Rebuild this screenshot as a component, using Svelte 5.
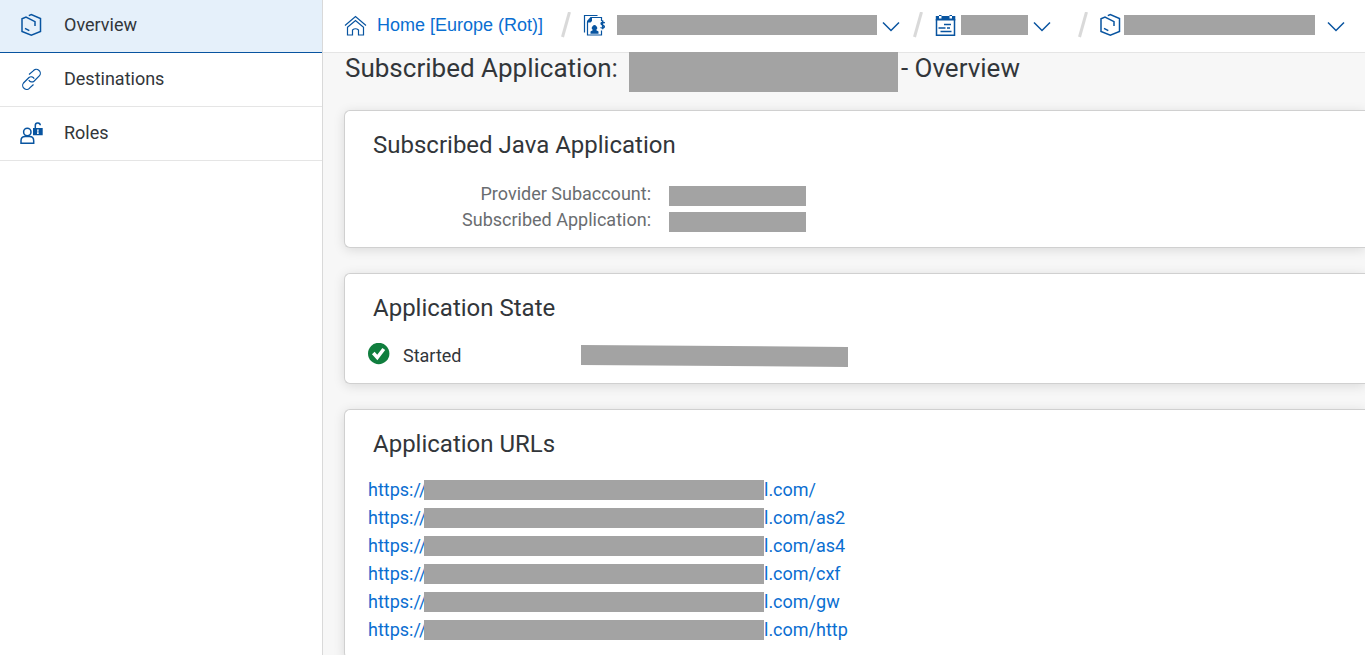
<script lang="ts">
  const nav = [
    { label: 'Overview', icon: 'cube' },
    { label: 'Destinations', icon: 'link' },
    { label: 'Roles', icon: 'roles' }
  ];
  const paths = ['', 'as2', 'as4', 'cxf', 'gw', 'http'];
</script>

{#snippet cube()}
  <svg class="icon" viewBox="0 0 24 24" aria-hidden="true">
    <path d="m8.800 2.600 2.500-1.100 9.200 4v13l-9.200 3.800L2 18.500V5.800L6 4l9 4.600V13M5 15.300l4.300 2.400" />
  </svg>
{/snippet}

{#snippet link()}
  <svg class="icon thin" viewBox="0 0 24 24" aria-hidden="true">
    <path d="m9 7.500 4.200-3.600a3.800 3.800 0 0 1 6.300 4.800l-5.500 5.500a3.400 3.400 0 0 1-5.200-1.200M13.500 17.500l-3.700 3.300a3.800 3.800 0 0 1-6.300-4.800L9 10.500a3.400 3.400 0 0 1 5.200 1.200" />
  </svg>
{/snippet}

{#snippet roles()}
  <svg class="icon" viewBox="0 0 24 24" aria-hidden="true">
    <circle cx="7.300" cy="11" r="3.700" />
    <path d="M1 22.200v-2.500q0-4.200 4.200-4.200h4.300q4.200 0 4.200 4.200v2.500zM15.300 7V4.800a2.500 2.500 0 0 1 5-.5" />
    <path class="solid" fill-rule="evenodd" d="M13 7h9.700v7.300H13zM17 8.500l.4 2-.4 2.500h1.800l-.4-2.500.4-2z" />
  </svg>
{/snippet}

{#snippet chevron()}
  <svg class="chevron" viewBox="0 0 18 24" aria-hidden="true"><path d="m1 9.500 8 8 8-8" /></svg>
{/snippet}

{#snippet slash()}
  <svg class="slash" viewBox="0 0 10 26" aria-hidden="true"><path d="M8.500 0 1.500 25" /></svg>
{/snippet}

<div class="page">
  <nav class="side" aria-label="Application">
    {#each nav as item, i}
      <a href="#{item.icon}" class:active={i === 0}>
        {#if item.icon === 'cube'}{@render cube()}{:else if item.icon === 'link'}{@render link()}{:else}{@render roles()}{/if}
        {item.label}
      </a>
    {/each}
  </nav>
  <main>
    <header>
      <a class="home" href="#home">
        <svg class="icon thin" viewBox="0 0 24 24" aria-hidden="true">
          <path d="m1 12.500 10.500-9 10.500 9M3.500 14.300l8-6.800 8 6.800V22h-5v-5q-3-2.500-6 0v5h-5z" />
        </svg>
        Home [Europe (Rot)]
      </a>
      {@render slash()}
      <button class="crumb account" aria-label="Global account">
        <svg class="icon thin" viewBox="0 0 24 24" aria-hidden="true">
          <path d="M1.500 19.500V2.500h13M9 4.500h9.500V8M4.500 9v13h14v-4.500" />
          <path class="solid" d="M4 9.500V8l3.500-4H9v4L7.500 9.500zM7.500 20.700v-2.200l2.500-1.500a2.600 2.600 0 1 1 3 0l2.500 1.500v2.200z" />
          <path class="dollar" d="M21.800 9.800c-3-1.700-5.300 1-2.300 2.200 3.500 1.300 1.500 4.300-2 2.500M19.600 7.300v9" />
        </svg>
        <span class="mask wide"></span>
        {@render chevron()}
      </button>
      {@render slash()}
      <button class="crumb sub" aria-label="Subaccount">
        <svg class="icon" viewBox="0 0 24 24" aria-hidden="true">
          <path d="M2.500 6v16.200h18V6M10 11.500h7M4.500 15h7M13 15h3M6.500 18.500h11" />
          <path class="solid" fill-rule="evenodd" d="M1.800 3h19.500v4.500H1.800zM5 2v3.500h2.500V2zM15.500 2v3.500H18V2z" />
        </svg>
        <span class="mask short"></span>
        {@render chevron()}
      </button>
      {@render slash()}
      <button class="crumb app" aria-label="Subscribed application">
        {@render cube()}
        <span class="mask medium"></span>
        {@render chevron()}
      </button>
    </header>

    <h1>Subscribed Application: <span class="mask title"></span>- Overview</h1>

    <section>
      <h2>Subscribed Java Application</h2>
      <dl>
        <dt>Provider Subaccount:</dt>
        <dd><span class="mask"></span></dd>
        <dt>Subscribed Application:</dt>
        <dd><span class="mask"></span></dd>
      </dl>
    </section>

    <section>
      <h2>Application State</h2>
      <div class="state">
        <svg class="ok" viewBox="0 0 22 22" aria-hidden="true">
          <circle cx="10.700" cy="10.500" r="10.700" />
          <path d="m5.300 10 4 4.500 6.500-8.500" />
        </svg>
        <span class="status">Started</span>
        <svg class="since" viewBox="0 0 267 22" aria-hidden="true"><path d="M0 0 267 2V22L0 20z" /></svg>
      </div>
    </section>

    <section class="last">
      <h2>Application URLs</h2>
      <ul>
        {#each paths as path}
          <li><a href="#{path}"><span class="scheme">https://</span><span class="mask"></span>l.com/{path}</a></li>
        {/each}
      </ul>
    </section>
  </main>
</div>

<style>
  :global(body) { margin: 0; background: #f7f7f7; }
  .page {
    display: flex;
    min-height: 100vh;
    font: 18px/26px Roboto, "Liberation Sans", sans-serif;
    color: #32363a;
    overflow: hidden;
  }
  a { color: #0a6ed1; text-decoration: none; }
  svg { flex: none; fill: none; stroke: #0854a0; stroke-width: 1.5; }
  .icon { width: 24px; height: 24px; }
  .thin { stroke-width: 1.2; }
  .solid { fill: #0854a0; stroke: none; }
  .dollar { stroke-width: 1.4; }
  .chevron { width: 18px; height: 24px; }
  .slash { width: 10px; height: 26px; stroke: #d9d9d9; stroke-width: 3; }
  .mask { flex: none; background: #a3a3a3; height: 20px; }

  .side {
    flex: none;
    width: 322px;
    background: #fff;
    border-right: 1px solid #d9d9d9;
  }
  .side a {
    display: flex;
    align-items: center;
    gap: 20px;
    height: 51px;
    padding: 0 0 2px 20px;
    color: #32363a;
    border-bottom: 1px solid #e5e5e5;
  }
  .side a.active { height: 50px; background: #e5f0fa; border-color: #0854a0; }

  main { flex: 1; min-width: 0; }
  header {
    display: flex;
    align-items: center;
    height: 50px;
    padding: 0 0 2px 21px;
    background: #fff;
    border-bottom: 1px solid #e5e5e5;
  }
  .home { display: flex; align-items: center; gap: 9px; width: 217px; font-family: "Liberation Sans", sans-serif; white-space: nowrap; }
  .crumb { display: flex; align-items: center; padding: 0; border: 0; background: none; }
  .account { margin: 0 13px 0 12px; }
  .wide { width: 260px; margin: 0 5px 0 10px; }
  .sub { margin: 0 27px 0 11px; }
  .short { width: 67px; margin: 0 5px 0 3px; }
  .app { margin-left: 11px; }
  .medium { width: 191px; margin: 0 12px 0 1px; }

  h1, h2 { margin: 0; font-weight: 400; }
  h1 {
    position: relative;
    display: flex;
    height: 58px;
    margin-top: -1px;
    padding-left: 22px;
    font-size: 26px;
    line-height: 32px;
    white-space: nowrap;
  }
  .title { width: 269px; height: 40px; margin: 0 3px 0 11px; }

  section {
    margin: 0 0 25px 21px;
    padding: 20px 0 14px 23px;
    background: #fff;
    border: 1px solid #d0d0d0;
    border-right: 0;
    border-radius: 6px 0 0 6px;
    box-shadow: 0 2px 12px rgba(0, 0, 0, 0.12);
  }
  h2 { padding-left: 5px; font-size: 24px; line-height: 28px; }
  dl { display: grid; grid-template-columns: 283px 137px; column-gap: 18px; margin: 22px 0 0; }
  dt { text-align: right; color: #6a6d70; }
  dd { display: flex; align-items: flex-end; margin: 0; height: 25px; }
  dd .mask { width: 137px; }
  .state { display: flex; align-items: flex-start; margin-top: 21px; }
  .ok { width: 22px; height: 22px; margin-right: 13px; fill: #107e3e; stroke: none; }
  .ok path { fill: none; stroke: #fff; stroke-width: 3.5; }
  .status { width: 178px; }
  .since { width: 267px; height: 22px; margin-top: 2px; fill: #a3a3a3; stroke: none; }
  .last { margin-bottom: 0; }
  ul { margin: 18px 0 0; padding: 0; list-style: none; }
  li a { display: flex; align-items: center; height: 28px; }
  .scheme { width: 56px; }
  li .mask { width: 340px; }
</style>
